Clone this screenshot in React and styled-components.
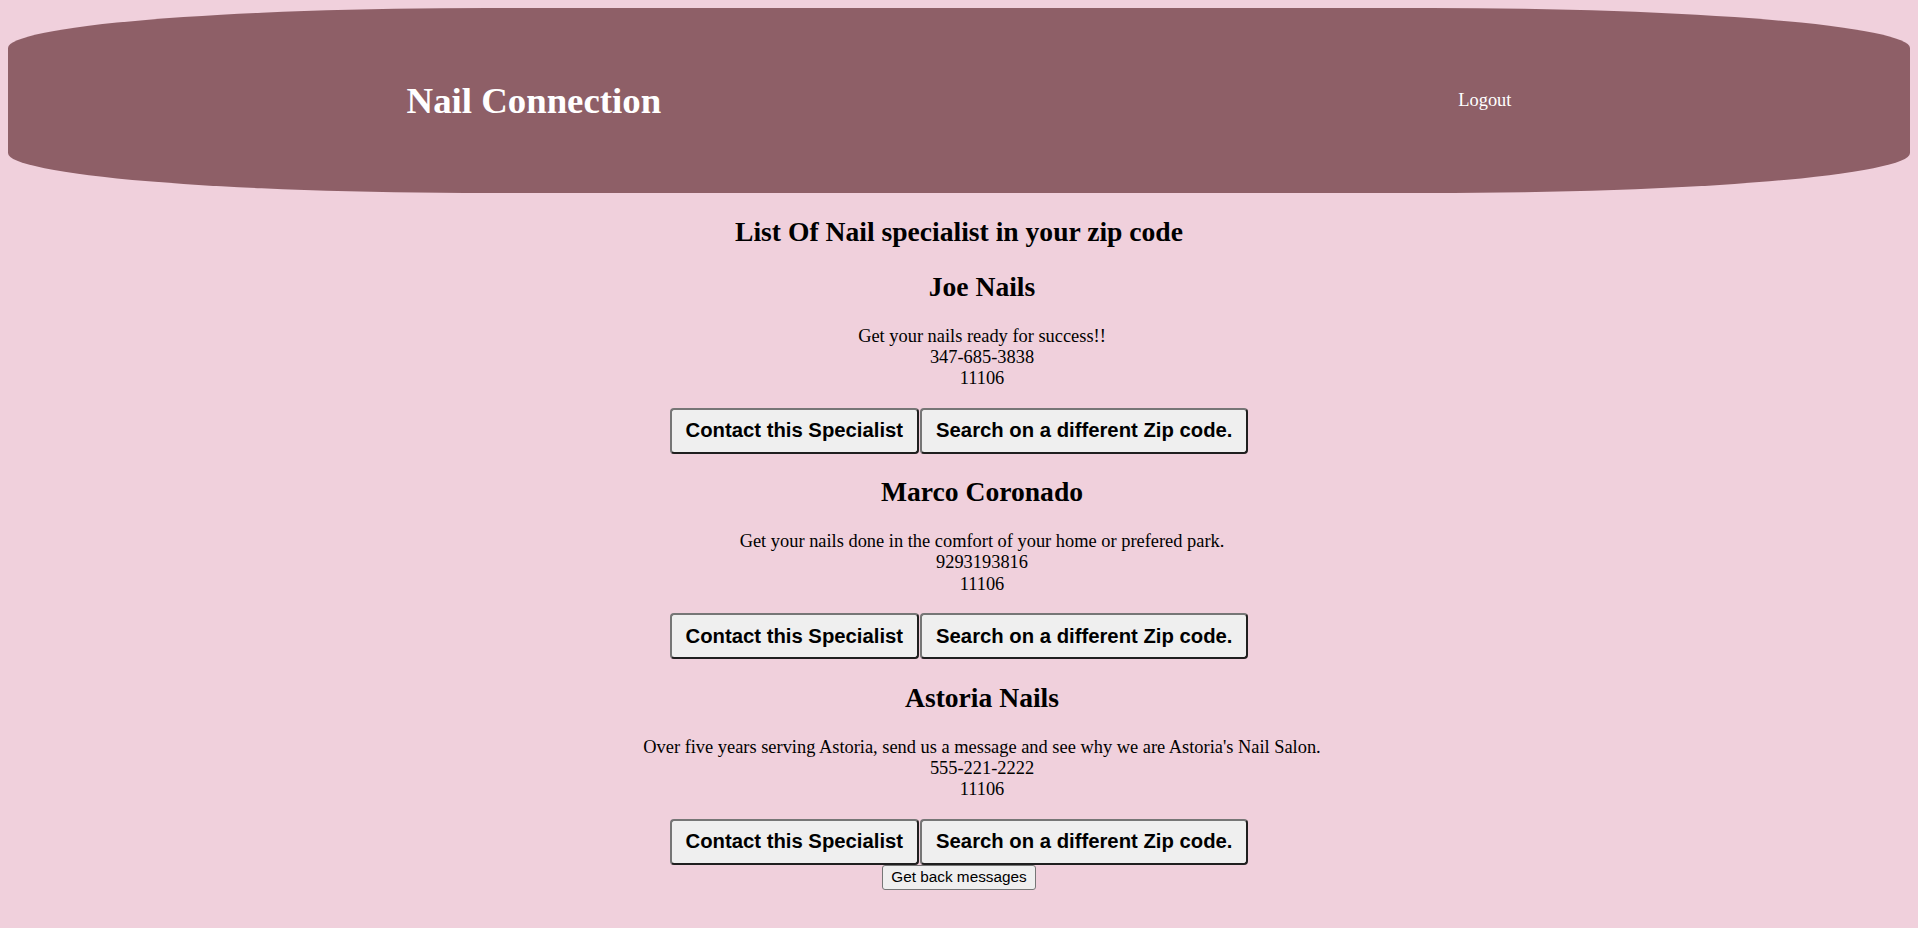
import React from "react";
import styled, { createGlobalStyle } from "styled-components";

const GlobalStyle = createGlobalStyle`
  html, body {
    background: #f0d0dc;
  }
  body {
    margin: 8px;
    font-family: "Liberation Serif", "Times New Roman", serif;
    color: #000;
  }
`;

const Header = styled.header`
  display: flex;
  justify-content: space-around;
  align-items: center;
  height: 185px;
  background: #8e5f67;
  border-radius: 480px / 40px;
`;

const Brand = styled.h1`
  margin: 0;
  font-size: 36.8px;
  font-weight: bold;
  color: #fff;
`;

const Logout = styled.a`
  font-size: 18.4px;
  color: #fff;
  text-decoration: none;
  cursor: pointer;
`;

const Main = styled.main`
  text-align: center;
`;

const Heading = styled.h2`
  margin: 22.9px 0;
  font-size: 27.6px;
  font-weight: bold;
`;

const Info = styled.div`
  padding-left: 46px;
`;

const Details = styled.p`
  margin: 18.4px 0;
  font-size: 18.4px;
  line-height: 21.15px;
`;

const Actions = styled.div`
  display: flex;
  justify-content: center;
  gap: 1px;
`;

const BigButton = styled.button`
  padding: 9.5px 14px;
  font-family: "Liberation Sans", Arial, sans-serif;
  font-size: 20.3px;
  font-weight: bold;
  line-height: 23px;
  color: #000;
  background: #efefef;
  border: 2px solid;
  border-color: #767676 #1f1f1f #1f1f1f #767676;
  border-radius: 4px;
  cursor: pointer;
`;

const SmallButton = styled.button`
  padding: 2.5px 8px;
  font-family: "Liberation Sans", Arial, sans-serif;
  font-size: 15.33px;
  line-height: 18px;
  color: #000;
  background: #efefef;
  border: 1px solid #767676;
  border-radius: 3px;
  cursor: pointer;
`;

const specialists = [
  {
    name: "Joe Nails",
    about: "Get your nails ready for success!!",
    phone: "347-685-3838",
    zip: "11106",
  },
  {
    name: "Marco Coronado",
    about: "Get your nails done in the comfort of your home or prefered park.",
    phone: "9293193816",
    zip: "11106",
  },
  {
    name: "Astoria Nails",
    about:
      "Over five years serving Astoria, send us a message and see why we are Astoria's Nail Salon.",
    phone: "555-221-2222",
    zip: "11106",
  },
];

const App = () => {
  return (
    <>
      <GlobalStyle />
      <Header>
        <Brand>Nail Connection</Brand>
        <Logout>Logout</Logout>
      </Header>
      <Main>
        <Heading>List Of Nail specialist in your zip code</Heading>
        {specialists.map((s) => (
          <section key={s.name}>
            <Info>
              <Heading>{s.name}</Heading>
              <Details>
                {s.about}
                <br />
                {s.phone}
                <br />
                {s.zip}
              </Details>
            </Info>
            <Actions>
              <BigButton>Contact this Specialist</BigButton>
              <BigButton>Search on a different Zip code.</BigButton>
            </Actions>
          </section>
        ))}
        <SmallButton>Get back messages</SmallButton>
      </Main>
    </>
  );
};

export default App;
